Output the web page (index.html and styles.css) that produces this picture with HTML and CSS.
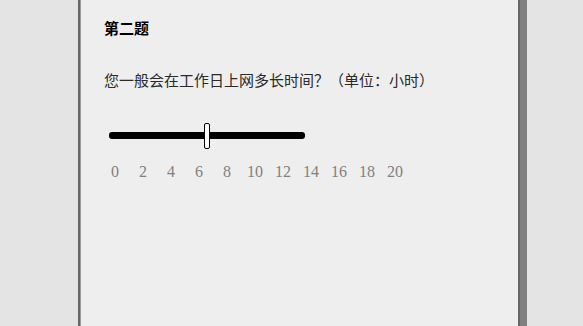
FILE: index.html
```html
<!DOCTYPE html>
<html lang="zh-CN">
<head>
<meta charset="utf-8">
<title>第二题</title>
<link rel="stylesheet" href="styles.css">
</head>
<body>
<div class="panel">
  <div class="title">第二题</div>
  <div class="question">您一般会在工作日上网多长时间？（单位：小时）</div>
  <div class="slider">
    <div class="track"></div>
    <div class="thumb" style="left: 50%"></div>
  </div>
  <div class="ticks">
    <span>0</span><span>2</span><span>4</span><span>6</span><span>8</span><span>10</span><span>12</span><span>14</span><span>16</span><span>18</span><span>20</span>
  </div>
</div>
</body>
</html>
```

FILE: styles.css
```css
html, body {
  margin: 0;
  padding: 0;
  height: 100%;
  overflow: hidden;
  background: #e4e4e4;
}

.panel {
  box-sizing: border-box;
  margin-left: 78px;
  width: 442px;
  min-height: 100%;
  background: #eeeeee;
  border-left: 2px solid #666666;
  border-right: 2px solid #666666;
  box-shadow: 7px 0 0 #808080, inset 1px 0 0 #9a9a9a;
  padding: 18px 0 0 24px;
  font-family: "Noto Sans CJK SC", "Noto Sans", sans-serif;
}

.title {
  font-size: 15px;
  line-height: 20px;
  font-weight: bold;
  color: #000000;
}

.question {
  margin-top: 32px;
  font-size: 15px;
  line-height: 20px;
  color: #2a2a2a;
}

.slider {
  position: relative;
  margin-top: 33px;
  margin-left: 5px;
  width: 196px;
  height: 26px;
}

.track {
  position: relative;
  top: 9px;
  height: 7px;
  background: #000000;
  border-radius: 3px;
}

.thumb {
  position: absolute;
  top: 0;
  box-sizing: border-box;
  width: 6px;
  height: 26px;
  margin-left: -3px;
  background: #ffffff;
  border: 1.5px solid #000000;
  border-radius: 2px;
}

.ticks {
  display: flex;
  margin-top: 14px;
  margin-left: -3px;
  font-family: "Liberation Serif", serif;
  font-size: 16px;
  line-height: 18px;
  color: #808080;
}

.ticks span {
  width: 28px;
  text-align: center;
}
```
